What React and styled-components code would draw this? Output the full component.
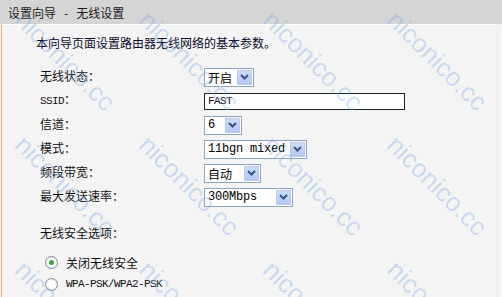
import React from 'react'
import styled, { createGlobalStyle } from 'styled-components'

const GlobalStyle = createGlobalStyle`
  html, body {
    margin: 0;
    padding: 0;
    background: #f4f4f4;
  }
  body {
    font-family: "Noto Sans CJK SC", sans-serif;
    font-size: 12px;
    color: #111;
  }
`

const rows = [
  { label: '无线状态：', kind: 'select', value: '开启', width: 50 },
  { label: 'SSID', latinLabel: true, kind: 'input', value: 'FAST', width: 201 },
  { label: '信道：', kind: 'select', value: '6', width: 38, latin: true },
  { label: '模式：', kind: 'select', value: '11bgn mixed', width: 103, latin: true },
  { label: '频段带宽：', kind: 'select', value: '自动', width: 57 },
  { label: '最大发送速率：', kind: 'select', value: '300Mbps', width: 89, latin: true },
]

// watermark grid, same text repeated every 124 x 125 px
const marks = []
for (const top of [6, 131, 256]) {
  for (const left of [29, 153, 277, 401]) marks.push({ left, top })
}

function Chevron() {
  return (
    <svg width="9" height="6" viewBox="0 0 9 6">
      <polyline points="1,1 4.5,4.5 8,1" fill="none" stroke="#3b5585" strokeWidth="2" />
    </svg>
  )
}

function Dropdown({ value, width, latin }) {
  return (
    <Select $width={width}>
      <SelectText $latin={latin}>{value}</SelectText>
      <DropButton><Chevron /></DropButton>
    </Select>
  )
}

export default function App() {
  return (
    <Page>
      <GlobalStyle />
      <TitleBar>设置向导<Dash>-</Dash>无线设置</TitleBar>
      <Panel>
        <Intro>本向导页面设置路由器无线网络的基本参数。</Intro>
        <Form>
          {rows.map((r, i) => (
            <Row key={i}>
              <Label>{r.latinLabel ? <><Latin>{r.label}</Latin>：</> : r.label}</Label>
              {r.kind === 'input'
                ? <TextInput $width={r.width}>{r.value}</TextInput>
                : <Dropdown value={r.value} width={r.width} latin={r.latin} />}
            </Row>
          ))}
        </Form>
        <Section>无线安全选项：</Section>
        <Options>
          <RadioRow>
            <Radio $checked />
            <span>关闭无线安全</span>
          </RadioRow>
          <RadioRow>
            <Radio />
            <Latin>WPA-PSK/WPA2-PSK</Latin>
          </RadioRow>
        </Options>
      </Panel>
      <Watermarks>
        {marks.map((m, i) => (
          <Mark key={i} style={{ left: m.left, top: m.top }}>niconico.cc</Mark>
        ))}
      </Watermarks>
    </Page>
  )
}

const Page = styled.div`
  position: relative;
  width: 502px;
  height: 297px;
  overflow: hidden;
  background: #f4f4f4;
  display: flex;
  flex-direction: column;
`

const TitleBar = styled.div`
  height: 24px;
  flex-shrink: 0;
  background: #d5d5d5;
  padding-left: 8px;
  display: flex;
  align-items: center;
  font-size: 12px;
  color: #1a1a1a;
`

const Dash = styled.span`
  margin: 0 8px;
`

const Panel = styled.div`
  flex: 1;
  margin: 0 4px 0 1px;
  border-left: 1px solid #e2b27c;
  border-right: 1px solid #f4e6da;
  border-top: 1px solid #ffffff;
  padding: 10px 0 0 34px;
  background: #f4f4f4;
`

const Intro = styled.div`
  line-height: 16px;
  color: #0b0b2a;
`

const Form = styled.div`
  margin: 14px 0 0 4px;
  display: flex;
  flex-direction: column;
`

const Row = styled.div`
  height: 24px;
  display: grid;
  grid-template-columns: 164px auto;
  align-items: center;
`

const Label = styled.div`
  line-height: 16px;
  margin-top: -3px;
`

const Latin = styled.span`
  font-family: "Liberation Mono", monospace;
  font-size: 11px;
  letter-spacing: -0.6px;
`

const Select = styled.div`
  width: ${p => p.$width}px;
  height: 19px;
  box-sizing: border-box;
  border: 1px solid #8fa5bf;
  background: #fff;
  display: flex;
  align-items: center;
  justify-content: space-between;
  padding: 0 1px 0 3px;
`

const SelectText = styled.span`
  font-family: ${p => (p.$latin ? '"Liberation Mono", monospace' : '"Noto Sans CJK SC", sans-serif')};
  font-size: 12px;
  letter-spacing: ${p => (p.$latin ? '-0.2px' : '0')};
  color: #000;
  white-space: nowrap;
`

const DropButton = styled.div`
  width: 15px;
  height: 15px;
  box-sizing: border-box;
  border: 1px solid #b7c9f1;
  background: linear-gradient(#cfdcfb, #b5c8f5);
  display: flex;
  align-items: center;
  justify-content: center;
`

const TextInput = styled.div`
  width: ${p => p.$width}px;
  height: 17px;
  box-sizing: border-box;
  border: 1px solid #142626;
  background: #fff;
  padding-left: 3px;
  font-family: "Liberation Mono", monospace;
  font-size: 11px;
  letter-spacing: -0.6px;
  display: flex;
  align-items: center;
`

const Section = styled.div`
  margin: 16px 0 0 4px;
  line-height: 16px;
`

const Options = styled.div`
  margin-top: 10px;
  display: flex;
  flex-direction: column;
`

const RadioRow = styled.div`
  height: 22px;
  display: flex;
  align-items: center;
  gap: 8px;
  padding-left: 9px;
`

const Radio = styled.span`
  width: 13px;
  height: 13px;
  flex-shrink: 0;
  box-sizing: border-box;
  border-radius: 50%;
  border: 1px solid #7d8c9b;
  background: radial-gradient(circle, #ffffff 40%, #e4e4e0 100%);
  position: relative;
  &::after {
    content: '';
    display: ${p => (p.$checked ? 'block' : 'none')};
    position: absolute;
    left: 3px;
    top: 3px;
    width: 5px;
    height: 5px;
    border-radius: 50%;
    background: #3aa23a;
  }
`

const Watermarks = styled.div`
  position: absolute;
  inset: 0;
  pointer-events: none;
`

const Mark = styled.span`
  position: absolute;
  font-family: "Liberation Sans", sans-serif;
  font-size: 26px;
  line-height: 1;
  white-space: nowrap;
  color: rgba(120, 165, 230, 0.34);
  transform-origin: 0 0;
  transform: rotate(45deg);
`
